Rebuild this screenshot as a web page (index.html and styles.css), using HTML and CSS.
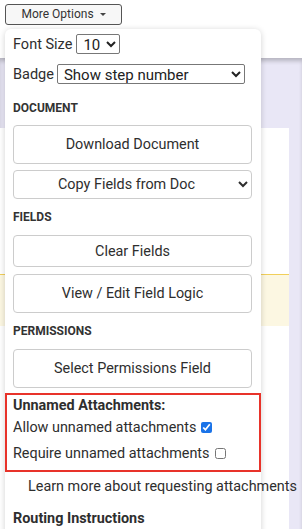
FILE: index.html
```html
<!DOCTYPE html>
<html lang="en">
<head>
  <title>More Options</title>
  <meta charset="UTF-8">
  <meta name="viewport" content="width=device-width, initial-scale=1">
  <link rel="stylesheet" href="styles.css">
</head>
<body>
  <div class="topbar">
    <button class="more-btn">More Options <span class="caret"></span></button>
  </div>
  <div class="workspace">
    <div class="sheet">
      <div class="field-hl"></div>
    </div>
  </div>

  <div class="menu">
    <div class="row">
      <label for="font-size">Font Size</label>
      <select id="font-size" class="sel sel-size">
        <option>10</option>
        <option>12</option>
        <option>14</option>
      </select>
    </div>
    <div class="row row-badge">
      <label for="badge">Badge</label>
      <select id="badge" class="sel sel-badge">
        <option>Show step number</option>
        <option>Show signer name</option>
      </select>
    </div>

    <div class="heading first">Document</div>
    <button class="menu-btn tall">Download Document</button>
    <select class="menu-select">
      <option>Copy Fields from Doc</option>
    </select>

    <div class="heading">Fields</div>
    <button class="menu-btn">Clear Fields</button>
    <button class="menu-btn tall gap">View / Edit Field Logic</button>

    <div class="heading">Permissions</div>
    <button class="menu-btn tall">Select Permissions Field</button>

    <div class="attach-box">
      <div class="attach-title">Unnamed Attachments:</div>
      <label class="check-row">Allow unnamed attachments <input type="checkbox" checked></label>
      <label class="check-row">Require unnamed attachments <input type="checkbox"></label>
    </div>

    <a class="learn" href="#">Learn more about requesting attachments</a>
    <div class="routing">Routing Instructions</div>
  </div>
</body>
</html>
```

FILE: styles.css
```css
/* page */
body {
  margin: 0;
  font-family: Roboto, "Liberation Sans", sans-serif;
  color: #2e2e2e;
  overflow: hidden;
  height: 529px;
  position: relative;
}

/* top bar */
.topbar {
  height: 58px;
  background: #fff;
  padding: 3px 0 0 5px;
  box-sizing: border-box;
}

.more-btn {
  width: 117px;
  height: 21px;
  font-family: Roboto, "Liberation Sans", sans-serif;
  font-size: 12px;
  color: #333;
  background: #f7f7f7;
  border: 1px solid #555;
  border-radius: 3px;
  padding: 0;
}

.caret {
  display: inline-block;
  width: 0;
  height: 0;
  margin-left: 3px;
  vertical-align: middle;
  border-left: 3px solid transparent;
  border-right: 3px solid transparent;
  border-top: 3px solid #444;
}

/* background work area */
.workspace {
  height: 471px;
  background: #e9e7f6;
  box-shadow: inset 0 4px 4px -1px rgba(0, 0, 0, 0.22);
  padding-top: 70px;
  box-sizing: border-box;
}

.sheet {
  width: 289px;
  height: 401px;
  background: #fff;
  padding-top: 146px;
  box-sizing: border-box;
}

.field-hl {
  height: 51px;
  background: #fcf7e2;
  border-top: 1px solid #f1cf5a;
}

/* dropdown menu */
.menu {
  position: absolute;
  left: 5px;
  top: 29px;
  width: 256px;
  height: 520px;
  background: #fff;
  border-radius: 6px;
  box-shadow: 0 1px 6px rgba(0, 0, 0, 0.18);
  padding: 5px 9px 0 8px;
  box-sizing: border-box;
  font-size: 14.4px;
}

.row {
  display: flex;
  align-items: center;
  gap: 4px;
  height: 20px;
}

.row-badge {
  margin-top: 10px;
  gap: 3px;
}

.row label {
  font-size: 14.5px;
}

.sel {
  height: 20px;
  font-family: Roboto, "Liberation Sans", sans-serif;
  font-size: 15px;
  color: #222;
  border: 1px solid #777;
  border-radius: 2px;
  background: #fff;
  padding: 0 2px;
}

.sel-size {
  width: 44px;
}

.sel-badge {
  width: 188px;
}

.heading {
  font-size: 12px;
  font-weight: bold;
  text-transform: uppercase;
  color: #333;
  line-height: 16px;
  margin: 10px 0 10px;
}

.heading.first {
  margin: 16px 0 9px;
}

.menu-btn {
  display: block;
  width: 239px;
  height: 32px;
  font-family: Roboto, "Liberation Sans", sans-serif;
  font-size: 14.4px;
  color: #2e2e2e;
  background: #fff;
  border: 1px solid #ccc;
  border-radius: 4px;
  padding: 0;
}

.menu-btn.tall {
  height: 39px;
}

.menu-btn.gap {
  margin-top: 7px;
}

.menu-select {
  display: block;
  width: 239px;
  height: 29px;
  margin: 6px 0 1px;
  font-family: Roboto, "Liberation Sans", sans-serif;
  font-size: 14.4px;
  color: #2e2e2e;
  background: #fff;
  border: 1px solid #ccc;
  border-radius: 4px;
  text-align: center;
  text-align-last: center;
}

/* highlighted attachment options */
.attach-box {
  margin: 5px -9px 0 -8px;
  height: 79px;
  border: 2px solid #e8332a;
  padding: 2px 0 0 6px;
  box-sizing: border-box;
}

.attach-title {
  font-weight: bold;
  line-height: 18px;
}

.check-row {
  display: flex;
  align-items: center;
  gap: 5px;
  height: 20px;
  margin-top: 2px;
}

.check-row + .check-row {
  margin-top: 6px;
}

.check-row input {
  width: 11px;
  height: 11px;
  margin: 0;
  accent-color: #1a73e8;
}

.learn {
  display: block;
  margin: 6px 0 0 15px;
  color: #2e2e2e;
  text-decoration: none;
  white-space: nowrap;
  line-height: 18px;
}

.routing {
  font-weight: bold;
  margin-top: 14px;
  line-height: 18px;
}
```
